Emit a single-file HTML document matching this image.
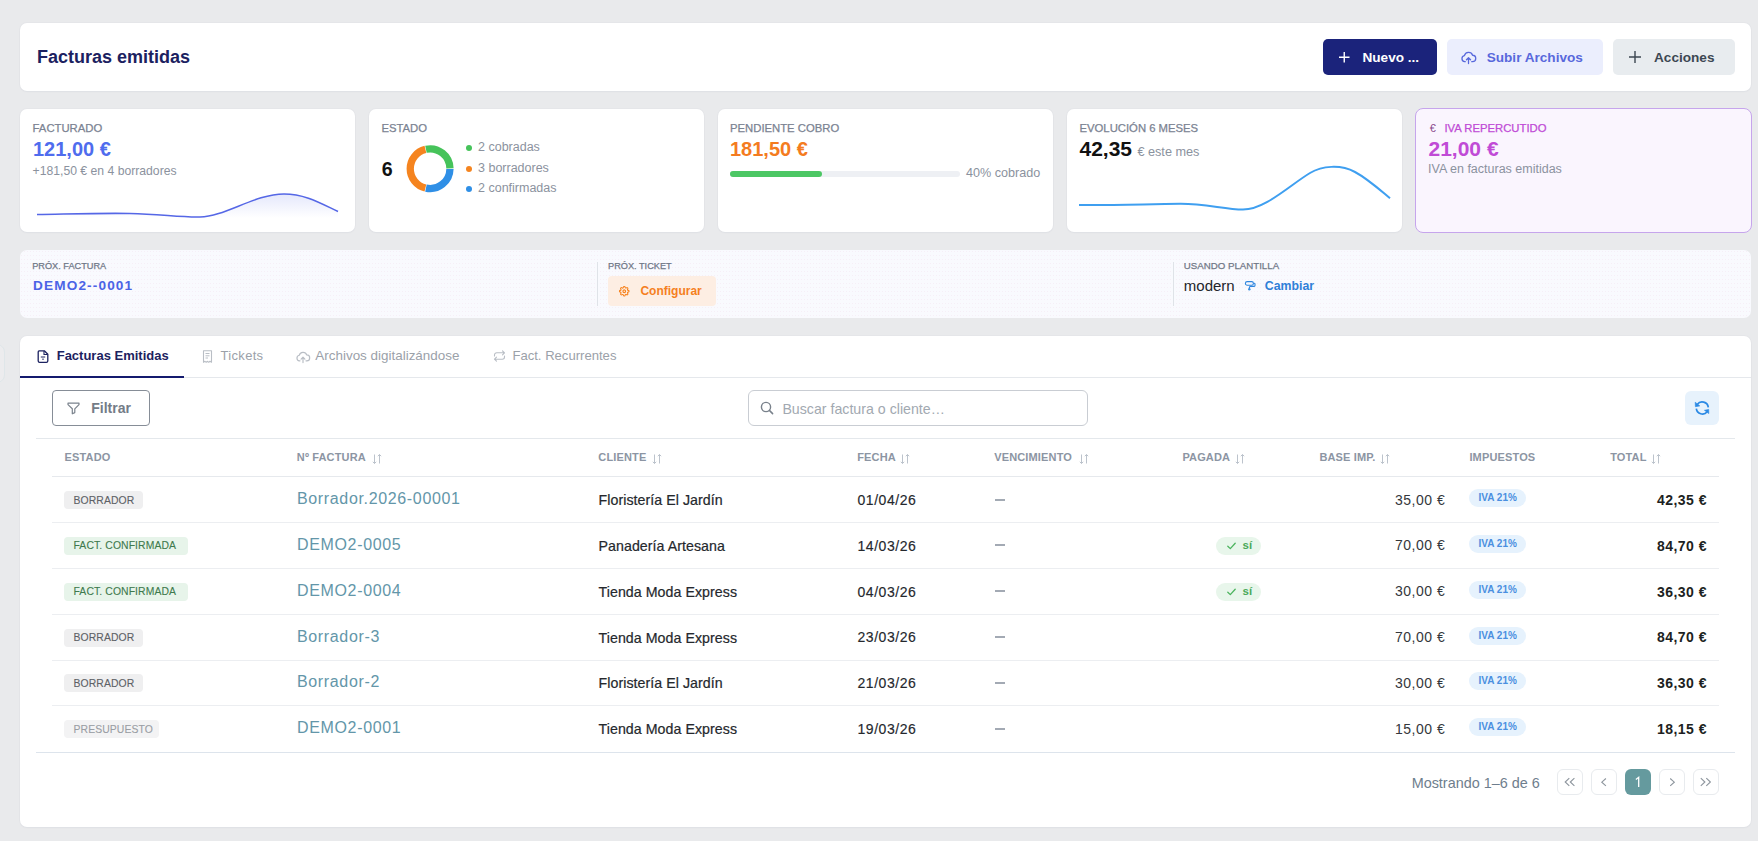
<!DOCTYPE html>
<html><head><meta charset="utf-8">
<style>
*{box-sizing:border-box;margin:0;padding:0}
html,body{width:1758px;height:841px;overflow:hidden;background:#e9eaec;font-family:"Liberation Sans",sans-serif}
.a{position:absolute}
.t{position:absolute;line-height:1;white-space:nowrap}
.m{-webkit-text-stroke:0.25px currentColor}
svg{position:absolute;overflow:visible}
</style></head><body>
<div class="a" style="left:-30px;top:344px;width:35px;height:39px;background:#ececee;border-radius:8px;border:1px solid #dfe6e9"></div>
<div class="a" style="left:20px;top:23px;width:1731px;height:68px;background:#fff;border-radius:7px;box-shadow:0 0 0 1px rgba(40,60,90,.018),0 1px 2px rgba(40,60,90,.03)"></div>
<div class="t" style="left:37.0px;top:47.76px;font-size:18px;color:#1b2160;font-weight:700">Facturas emitidas</div>
<div class="a" style="left:1323px;top:39px;width:114px;height:36px;background:#1b237b;border-radius:5px"></div>
<svg style="left:1339px;top:52px" width="11" height="11"><path d="M5.25 0V10.5M0 5.25H10.5" stroke="#fff" stroke-width="1.4"/></svg>
<div class="t" style="left:1362.5px;top:51.39px;font-size:13.6px;color:#fff;font-weight:700">Nuevo ...</div>
<div class="a" style="left:1447px;top:39px;width:156px;height:36px;background:#ebeefd;border-radius:5px"></div>
<svg style="left:1460.5px;top:51px" width="15" height="13" viewBox="0 0 16 14"><path d="M4.5 11.5H3.8A3.3 3.3 0 0 1 3.6 5 4.6 4.6 0 0 1 12.4 4.6 3.4 3.4 0 0 1 12.3 11.5H11.5M8 13.5V7.5M5.8 9.5L8 7.3 10.2 9.5" fill="none" stroke="#5868dc" stroke-width="1.4" stroke-linecap="round" stroke-linejoin="round"/></svg>
<div class="t" style="left:1486.7px;top:51.39px;font-size:13.6px;color:#5868dc;font-weight:700">Subir Archivos</div>
<div class="a" style="left:1613px;top:39px;width:122px;height:36px;background:#e8ecef;border-radius:5px"></div>
<svg style="left:1629px;top:50.8px" width="12" height="12"><path d="M6 0V12M0 6H12" stroke="#3c4752" stroke-width="1.4"/></svg>
<div class="t" style="left:1654.0px;top:51.39px;font-size:13.6px;color:#3c4752;font-weight:700">Acciones</div>
<div class="a" style="left:20px;top:109px;width:335px;height:123px;background:#fff;border-radius:7px;box-shadow:0 0 0 1px rgba(40,60,90,.018),0 1px 2px rgba(40,60,90,.03)"></div>
<div class="a" style="left:369px;top:109px;width:335px;height:123px;background:#fff;border-radius:7px;box-shadow:0 0 0 1px rgba(40,60,90,.018),0 1px 2px rgba(40,60,90,.03)"></div>
<div class="a" style="left:718px;top:109px;width:335px;height:123px;background:#fff;border-radius:7px;box-shadow:0 0 0 1px rgba(40,60,90,.018),0 1px 2px rgba(40,60,90,.03)"></div>
<div class="a" style="left:1067px;top:109px;width:335px;height:123px;background:#fff;border-radius:7px;box-shadow:0 0 0 1px rgba(40,60,90,.018),0 1px 2px rgba(40,60,90,.03)"></div>
<div class="a" style="left:1415px;top:108px;width:337px;height:125px;background:#faf5fe;border-radius:8px;border:1px solid #c6a5ec"></div>
<div class="t m" style="left:32.6px;top:122.73px;font-size:11.3px;color:#7b8392">FACTURADO</div>
<div class="t" style="left:33.0px;top:139.07px;font-size:20px;color:#4f6cee;font-weight:700">121,00 €</div>
<div class="t" style="left:32.6px;top:164.87px;font-size:12.2px;color:#8b929e">+181,50 € en 4 borradores</div>
<svg style="left:0;top:0" width="360" height="240">
  <defs><linearGradient id="g1" x1="0" y1="0" x2="0" y2="1"><stop offset="0" stop-color="#5b6ee8" stop-opacity=".16"/><stop offset="1" stop-color="#5b6ee8" stop-opacity="0"/></linearGradient></defs>
  <path d="M37 214.5 C70 214 100 213 130 213.5 C160 214 180 217.5 200 217 C225 216.5 255 194 284 194 C305 194 320 203 338 211.5 L338 218 L37 218Z" fill="url(#g1)"/>
  <path d="M37 214.5 C70 214 100 213 130 213.5 C160 214 180 217.5 200 217 C225 216.5 255 194 284 194 C305 194 320 203 338 211.5" fill="none" stroke="#5567e6" stroke-width="1.6"/>
</svg>
<div class="t m" style="left:381.4px;top:122.73px;font-size:11.3px;color:#7b8392">ESTADO</div>
<div class="t" style="left:381.8px;top:160.01px;font-size:19.6px;color:#111;font-weight:700">6</div>
<svg style="left:0;top:0" width="720" height="240">
  <path d="M449.95 168.98A19.85 19.85 0 0 1 425.95 188.11" fill="none" stroke="#2f8fe6" stroke-width="7.3"/>
  <path d="M425.41 187.99A19.85 19.85 0 0 1 425.41 149.41" fill="none" stroke="#f5841f" stroke-width="7.3"/>
  <path d="M425.95 149.29A19.85 19.85 0 0 1 449.95 168.42" fill="none" stroke="#46c35a" stroke-width="7.3"/>
</svg>
<div class="a" style="left:466px;top:144.6px;width:6px;height:6px;background:#46c35a;border-radius:3px"></div>
<div class="a" style="left:466px;top:165.7px;width:6px;height:6px;background:#f5841f;border-radius:3px"></div>
<div class="a" style="left:466px;top:185.8px;width:6px;height:6px;background:#2f8fe6;border-radius:3px"></div>
<div class="t" style="left:478.0px;top:141.22px;font-size:12.5px;color:#8b929e">2 cobradas</div>
<div class="t" style="left:478.0px;top:162.02px;font-size:12.5px;color:#8b929e">3 borradores</div>
<div class="t" style="left:478.0px;top:182.42px;font-size:12.5px;color:#8b929e">2 confirmadas</div>
<div class="t m" style="left:730.0px;top:122.73px;font-size:11.3px;color:#7b8392">PENDIENTE COBRO</div>
<div class="t" style="left:730.0px;top:138.77px;font-size:20px;color:#f47b20;font-weight:700">181,50 €</div>
<div class="a" style="left:730px;top:171px;width:230px;height:6px;background:#eef0f4;border-radius:3px"></div>
<div class="a" style="left:730px;top:171px;width:92px;height:6px;background:#4cc764;border-radius:3px"></div>
<div class="t" style="left:966.0px;top:167.23px;font-size:12.6px;color:#8b929e">40% cobrado</div>
<div class="t m" style="left:1079.5px;top:122.73px;font-size:11.3px;color:#7b8392">EVOLUCIÓN 6 MESES</div>
<div class="t" style="left:1079.5px;top:137.92px;font-size:21px;color:#111;font-weight:700">42,35</div>
<div class="t" style="left:1137.4px;top:145.55px;font-size:12.7px;color:#8b929e">€ este mes</div>
<svg style="left:0;top:0" width="1420" height="240">
  <path d="M1079 205 C1110 205.5 1150 204 1180 203.8 C1205 203.6 1225 209.6 1243 209.6 C1265 209.6 1290 185 1310 173 C1322 166 1340 164 1355 172 C1368 179 1380 190 1390 198.3" fill="none" stroke="#3f9ff0" stroke-width="2"/>
</svg>
<div class="t" style="left:1429.8px;top:123.29px;font-size:11px;color:#8a4a8c">€</div>
<div class="t m" style="left:1444.4px;top:122.73px;font-size:11.3px;color:#c04bd6">IVA REPERCUTIDO</div>
<div class="t" style="left:1428.5px;top:137.92px;font-size:21px;color:#c04bd6;font-weight:700">21,00 €</div>
<div class="t" style="left:1428.0px;top:163.02px;font-size:12.5px;color:#8b929e">IVA en facturas emitidas</div>
<div class="a" style="left:20px;top:250px;width:1731px;height:68px;background:#f9fafe;border-radius:7px;background-image:radial-gradient(circle at 1.5px 1.5px,rgba(238,212,232,.28) .7px,transparent 1px);background-size:3px 4px"></div>
<div class="t m" style="left:32.2px;top:262.01px;font-size:9.2px;color:#707887">PRÓX. FACTURA</div>
<div class="t" style="left:33.0px;top:279.09px;font-size:13.6px;color:#4b63e6;font-weight:700;letter-spacing:1.15px">DEMO2--0001</div>
<div class="a" style="left:597px;top:262px;width:1px;height:44px;background:#dfe3e8"></div>
<div class="t m" style="left:608.0px;top:262.01px;font-size:9.2px;color:#707887">PRÓX. TICKET</div>
<div class="a" style="left:608px;top:276px;width:108px;height:29.5px;background:#fdeee3;border-radius:4px"></div>
<svg style="left:618.8px;top:285.8px" width="10.5" height="10.5" viewBox="0 0 24 24"><path d="M12 15a3 3 0 1 0 0-6 3 3 0 0 0 0 6z" fill="none" stroke="#f7821d" stroke-width="2.6"/><path d="M19.4 15a1.65 1.65 0 0 0 .33 1.82l.06.06a2 2 0 1 1-2.83 2.83l-.06-.06a1.65 1.65 0 0 0-1.82-.33 1.65 1.65 0 0 0-1 1.51V21a2 2 0 0 1-4 0v-.09A1.65 1.65 0 0 0 9 19.4a1.65 1.65 0 0 0-1.82.33l-.06.06a2 2 0 1 1-2.83-2.83l.06-.06A1.65 1.65 0 0 0 4.6 15a1.65 1.65 0 0 0-1.51-1H3a2 2 0 0 1 0-4h.09A1.65 1.65 0 0 0 4.6 9a1.65 1.65 0 0 0-.33-1.82l-.06-.06a2 2 0 1 1 2.83-2.83l.06.06A1.65 1.65 0 0 0 9 4.6a1.65 1.65 0 0 0 1-1.51V3a2 2 0 0 1 4 0v.09a1.65 1.65 0 0 0 1 1.51 1.65 1.65 0 0 0 1.82-.33l.06-.06a2 2 0 1 1 2.83 2.83l-.06.06A1.65 1.65 0 0 0 19.4 9a1.65 1.65 0 0 0 1.51 1H21a2 2 0 0 1 0 4h-.09a1.65 1.65 0 0 0-1.51 1z" fill="none" stroke="#f7821d" stroke-width="2.4"/></svg>
<div class="t" style="left:640.4px;top:285.04px;font-size:12px;color:#f5801e;font-weight:700">Configurar</div>
<div class="a" style="left:1173px;top:262px;width:1px;height:44px;background:#dfe3e8"></div>
<div class="t m" style="left:1183.8px;top:261.39px;font-size:9.7px;color:#707887">USANDO PLANTILLA</div>
<div class="t" style="left:1183.8px;top:278.30px;font-size:15px;color:#23262b">modern</div>
<svg style="left:1244px;top:280px" width="12" height="12" viewBox="0 0 12 12"><rect x="1.4" y="1.6" width="8" height="3.6" rx="1.8" fill="none" stroke="#2f86de" stroke-width="1.1"/><path d="M9.4 3.2H10.2A.8 .8 0 0 1 11 4V5.6A.8 .8 0 0 1 10.2 6.4H6.6A1.2 1.2 0 0 0 5.4 7.6V8.4" fill="none" stroke="#2f86de" stroke-width="1.1" stroke-linejoin="round"/><circle cx="5.3" cy="9.3" r="1.2" fill="#3a8fe2"/></svg>
<div class="t" style="left:1264.8px;top:279.59px;font-size:12.3px;color:#2f80d8;font-weight:700">Cambiar</div>
<div class="a" style="left:20px;top:336px;width:1731px;height:491px;background:#fff;border-radius:7px;box-shadow:0 0 0 1px rgba(40,60,90,.018),0 1px 2px rgba(40,60,90,.03)"></div>
<div class="a" style="left:20px;top:377px;width:1731px;height:1px;background:#e5e8ec"></div>
<div class="a" style="left:20px;top:376px;width:164px;height:2.3px;background:#141a6e"></div>
<svg style="left:37px;top:349.5px" width="12" height="13" viewBox="0 0 12 13"><path d="M2.2 .8H7.3L10.8 4.3V11A1.4 1.4 0 0 1 9.4 12.3H2.6A1.4 1.4 0 0 1 1.2 11V2A1.2 1.2 0 0 1 2.2 .8Z" fill="none" stroke="#1c2260" stroke-width="1.3" stroke-linejoin="round"/><path d="M7 1V4.5H10.5M3.8 7H8.2M6 8.5V10" fill="none" stroke="#1c2260" stroke-width="1.1"/></svg>
<div class="t" style="left:56.7px;top:349.00px;font-size:13px;color:#1c2260;font-weight:700">Facturas Emitidas</div>
<svg style="left:202px;top:349.5px" width="11" height="13" viewBox="0 0 11 13"><path d="M1.5 .7H9.5V12.3L8 11.3 6.7 12.3 5.5 11.3 4.2 12.3 3 11.3 1.5 12.3Z" fill="none" stroke="#b9bec5" stroke-width="1.1" stroke-linejoin="round"/><path d="M3.5 3.5H7.5M3.5 5.8H7.5M3.5 8H6" stroke="#b9bec5" stroke-width="1"/></svg>
<div class="t" style="left:220.6px;top:349.00px;font-size:13px;color:#9ba1a9;letter-spacing:0.3px">Tickets</div>
<svg style="left:295.5px;top:350.5px" width="14" height="12" viewBox="0 0 16 14"><path d="M4.5 11.5H3.8A3.3 3.3 0 0 1 3.6 5 4.6 4.6 0 0 1 12.4 4.6 3.4 3.4 0 0 1 12.3 11.5H11.5M8 13.5V7.5M5.8 9.5L8 7.3 10.2 9.5" fill="none" stroke="#b9bec5" stroke-width="1.4" stroke-linecap="round" stroke-linejoin="round"/></svg>
<div class="t" style="left:315.3px;top:348.61px;font-size:13.45px;color:#9ba1a9">Archivos digitalizándose</div>
<svg style="left:492.5px;top:350px" width="13" height="12" viewBox="0 0 13 12"><path d="M9.5 .8L11.5 2.8 9.5 4.8M1.5 6V5A2.2 2.2 0 0 1 3.7 2.8H11.5M3.5 11.2L1.5 9.2 3.5 7.2M11.5 6V7A2.2 2.2 0 0 1 9.3 9.2H1.5" fill="none" stroke="#b9bec5" stroke-width="1.1" stroke-linecap="round" stroke-linejoin="round"/></svg>
<div class="t" style="left:512.4px;top:348.91px;font-size:13.1px;color:#9ba1a9">Fact. Recurrentes</div>
<div class="a" style="left:52px;top:390px;width:98px;height:36px;border-radius:4px;border:1px solid #868d97"></div>
<svg style="left:66.5px;top:401.5px" width="13" height="13" viewBox="0 0 13 13"><path d="M1 1.2H12V2.6L7.8 6.8V10.6L5.3 11.8V6.8L1 2.6Z" fill="none" stroke="#7b838d" stroke-width="1.2" stroke-linejoin="round"/></svg>
<div class="t" style="left:91.2px;top:400.65px;font-size:14px;color:#747c87;font-weight:700">Filtrar</div>
<div class="a" style="left:748px;top:390px;width:340px;height:36px;border-radius:6px;border:1px solid #c9cdd3"></div>
<svg style="left:759.5px;top:400.6px" width="14" height="14" viewBox="0 0 14 14"><circle cx="6" cy="6" r="4.6" fill="none" stroke="#79818b" stroke-width="1.4"/><path d="M9.4 9.4L12.6 12.6" stroke="#79818b" stroke-width="1.5" stroke-linecap="round"/></svg>
<div class="t" style="left:782.4px;top:401.68px;font-size:14.2px;color:#a2a9b1">Buscar factura o cliente…</div>
<div class="a" style="left:1685px;top:391px;width:34px;height:34px;background:#e7f2fc;border-radius:6px"></div>
<svg style="left:1682px;top:388px" width="40" height="40" viewBox="0 0 40 40"><path d="M15.2 16.4A6.2 6.2 0 0 1 26.3 19.4M14.3 20.6A6.2 6.2 0 0 0 25.2 23.8" fill="none" stroke="#2b89e4" stroke-width="1.7"/><path d="M13.2 14.2L13.4 18.7 17.8 17.9Z M26.8 25.6L26.7 21.4 22.4 22.3Z" fill="#2b89e4" stroke="#2b89e4" stroke-width="0.6" stroke-linejoin="round"/></svg>
<div class="a" style="left:36px;top:438px;width:1699px;height:1px;background:#e4e8ec"></div>
<div class="t" style="left:64.6px;top:452.39px;font-size:11px;color:#8c95a3;font-weight:700;letter-spacing:0.15px">ESTADO</div>
<div class="t" style="left:296.8px;top:452.39px;font-size:11px;color:#8c95a3;font-weight:700;letter-spacing:0.15px">Nº FACTURA</div>
<svg style="left:371.6px;top:454.2px" width="10" height="10" viewBox="0 0 10 10"><path d="M2.5 .5V9.5M.8 7.8L2.5 9.5 4.2 7.8M7.5 9.5V.5M5.8 2.2L7.5 .5 9.2 2.2" fill="none" stroke="#bcc3cc" stroke-width="1"/></svg>
<div class="t" style="left:598.3px;top:452.39px;font-size:11px;color:#8c95a3;font-weight:700;letter-spacing:0.15px">CLIENTE</div>
<svg style="left:652.0px;top:454.2px" width="10" height="10" viewBox="0 0 10 10"><path d="M2.5 .5V9.5M.8 7.8L2.5 9.5 4.2 7.8M7.5 9.5V.5M5.8 2.2L7.5 .5 9.2 2.2" fill="none" stroke="#bcc3cc" stroke-width="1"/></svg>
<div class="t" style="left:857.2px;top:452.39px;font-size:11px;color:#8c95a3;font-weight:700;letter-spacing:0.15px">FECHA</div>
<svg style="left:900.4px;top:454.2px" width="10" height="10" viewBox="0 0 10 10"><path d="M2.5 .5V9.5M.8 7.8L2.5 9.5 4.2 7.8M7.5 9.5V.5M5.8 2.2L7.5 .5 9.2 2.2" fill="none" stroke="#bcc3cc" stroke-width="1"/></svg>
<div class="t" style="left:994.2px;top:452.39px;font-size:11px;color:#8c95a3;font-weight:700;letter-spacing:0.15px">VENCIMIENTO</div>
<svg style="left:1079.0px;top:454.2px" width="10" height="10" viewBox="0 0 10 10"><path d="M2.5 .5V9.5M.8 7.8L2.5 9.5 4.2 7.8M7.5 9.5V.5M5.8 2.2L7.5 .5 9.2 2.2" fill="none" stroke="#bcc3cc" stroke-width="1"/></svg>
<div class="t" style="left:1182.4px;top:452.39px;font-size:11px;color:#8c95a3;font-weight:700;letter-spacing:0.15px">PAGADA</div>
<svg style="left:1234.5px;top:454.2px" width="10" height="10" viewBox="0 0 10 10"><path d="M2.5 .5V9.5M.8 7.8L2.5 9.5 4.2 7.8M7.5 9.5V.5M5.8 2.2L7.5 .5 9.2 2.2" fill="none" stroke="#bcc3cc" stroke-width="1"/></svg>
<div class="t" style="left:1319.4px;top:452.39px;font-size:11px;color:#8c95a3;font-weight:700;letter-spacing:0.15px">BASE IMP.</div>
<svg style="left:1380.0px;top:454.2px" width="10" height="10" viewBox="0 0 10 10"><path d="M2.5 .5V9.5M.8 7.8L2.5 9.5 4.2 7.8M7.5 9.5V.5M5.8 2.2L7.5 .5 9.2 2.2" fill="none" stroke="#bcc3cc" stroke-width="1"/></svg>
<div class="t" style="left:1469.4px;top:452.39px;font-size:11px;color:#8c95a3;font-weight:700;letter-spacing:0.15px">IMPUESTOS</div>
<div class="t" style="left:1610.2px;top:452.39px;font-size:11px;color:#8c95a3;font-weight:700;letter-spacing:0.15px">TOTAL</div>
<svg style="left:1650.8px;top:454.2px" width="10" height="10" viewBox="0 0 10 10"><path d="M2.5 .5V9.5M.8 7.8L2.5 9.5 4.2 7.8M7.5 9.5V.5M5.8 2.2L7.5 .5 9.2 2.2" fill="none" stroke="#bcc3cc" stroke-width="1"/></svg>
<div class="a" style="left:52px;top:476px;width:1667px;height:1px;background:#e6e9ed"></div>
<div class="a" style="left:64px;top:491.0px;width:79px;height:18px;background:#efeff0;border-radius:4px"></div>
<div class="t" style="left:73.5px;top:495.60px;font-size:10.4px;color:#5d6166;letter-spacing:0.1px;-webkit-text-stroke:.1px currentColor">BORRADOR</div>
<div class="t" style="left:297.0px;top:491.06px;font-size:16px;color:#6396a9;letter-spacing:0.65px">Borrador.2026-00001</div>
<div class="t" style="left:598.6px;top:493.08px;font-size:14.2px;color:#25282d;letter-spacing:0.05px;-webkit-text-stroke:.2px currentColor">Floristería El Jardín</div>
<div class="t" style="left:857.5px;top:492.85px;font-size:14px;color:#25282d;letter-spacing:0.55px;-webkit-text-stroke:.15px currentColor">01/04/26</div>
<div class="a" style="left:994.7px;top:499px;width:10px;height:1.5px;background:#a3aab4"></div>
<div class="t" style="left:1145.2px;width:300px;text-align:right;top:492.65px;font-size:14px;color:#34373c;letter-spacing:0.5px">35,00 €</div>
<div class="a" style="left:1469px;top:489.0px;width:57px;height:18px;background:#e6f2fd;border-radius:9px"></div>
<div class="t" style="left:1478.5px;top:493.04px;font-size:10px;color:#4a8fe0;font-weight:700">IVA 21%</div>
<div class="t" style="left:1406.9px;width:300px;text-align:right;top:492.85px;font-size:14px;color:#1d1f22;font-weight:700;letter-spacing:0.45px">42,35 €</div>
<div class="a" style="left:52px;top:522px;width:1667px;height:1px;background:#eceef1"></div>
<div class="a" style="left:64px;top:536.8px;width:124px;height:18px;background:#e7f4ea;border-radius:4px"></div>
<div class="t" style="left:73.5px;top:541.44px;font-size:10.4px;color:#3e7a4d;letter-spacing:0.1px;-webkit-text-stroke:.1px currentColor">FACT. CONFIRMADA</div>
<div class="t" style="left:297.0px;top:536.90px;font-size:16px;color:#6396a9;letter-spacing:0.65px">DEMO2-0005</div>
<div class="t" style="left:598.6px;top:538.92px;font-size:14.2px;color:#25282d;letter-spacing:0.05px;-webkit-text-stroke:.2px currentColor">Panadería Artesana</div>
<div class="t" style="left:857.5px;top:538.69px;font-size:14px;color:#25282d;letter-spacing:0.55px;-webkit-text-stroke:.15px currentColor">14/03/26</div>
<div class="a" style="left:994.7px;top:544px;width:10px;height:1.5px;background:#a3aab4"></div>
<div class="a" style="left:1216px;top:536.8px;width:45px;height:18px;background:#e8f6eb;border-radius:9px"></div>
<svg style="left:1227px;top:542.0px" width="9" height="8" viewBox="0 0 9 8"><path d="M.8 4.2L3.3 6.6 8.2 1.2" fill="none" stroke="#4cb45e" stroke-width="1.3" stroke-linecap="round" stroke-linejoin="round"/></svg>
<div class="t" style="left:1242.5px;top:540.11px;font-size:11.5px;color:#4aa95a;font-weight:700">sí</div>
<div class="t" style="left:1145.2px;width:300px;text-align:right;top:538.49px;font-size:14px;color:#34373c;letter-spacing:0.5px">70,00 €</div>
<div class="a" style="left:1469px;top:534.8px;width:57px;height:18px;background:#e6f2fd;border-radius:9px"></div>
<div class="t" style="left:1478.5px;top:538.87px;font-size:10px;color:#4a8fe0;font-weight:700">IVA 21%</div>
<div class="t" style="left:1406.9px;width:300px;text-align:right;top:538.69px;font-size:14px;color:#1d1f22;font-weight:700;letter-spacing:0.45px">84,70 €</div>
<div class="a" style="left:52px;top:568px;width:1667px;height:1px;background:#eceef1"></div>
<div class="a" style="left:64px;top:582.7px;width:124px;height:18px;background:#e7f4ea;border-radius:4px"></div>
<div class="t" style="left:73.5px;top:587.28px;font-size:10.4px;color:#3e7a4d;letter-spacing:0.1px;-webkit-text-stroke:.1px currentColor">FACT. CONFIRMADA</div>
<div class="t" style="left:297.0px;top:582.74px;font-size:16px;color:#6396a9;letter-spacing:0.65px">DEMO2-0004</div>
<div class="t" style="left:598.6px;top:584.76px;font-size:14.2px;color:#25282d;letter-spacing:0.05px;-webkit-text-stroke:.2px currentColor">Tienda Moda Express</div>
<div class="t" style="left:857.5px;top:584.53px;font-size:14px;color:#25282d;letter-spacing:0.55px;-webkit-text-stroke:.15px currentColor">04/03/26</div>
<div class="a" style="left:994.7px;top:590px;width:10px;height:1.5px;background:#a3aab4"></div>
<div class="a" style="left:1216px;top:582.7px;width:45px;height:18px;background:#e8f6eb;border-radius:9px"></div>
<svg style="left:1227px;top:587.9px" width="9" height="8" viewBox="0 0 9 8"><path d="M.8 4.2L3.3 6.6 8.2 1.2" fill="none" stroke="#4cb45e" stroke-width="1.3" stroke-linecap="round" stroke-linejoin="round"/></svg>
<div class="t" style="left:1242.5px;top:585.95px;font-size:11.5px;color:#4aa95a;font-weight:700">sí</div>
<div class="t" style="left:1145.2px;width:300px;text-align:right;top:584.33px;font-size:14px;color:#34373c;letter-spacing:0.5px">30,00 €</div>
<div class="a" style="left:1469px;top:580.7px;width:57px;height:18px;background:#e6f2fd;border-radius:9px"></div>
<div class="t" style="left:1478.5px;top:584.71px;font-size:10px;color:#4a8fe0;font-weight:700">IVA 21%</div>
<div class="t" style="left:1406.9px;width:300px;text-align:right;top:584.53px;font-size:14px;color:#1d1f22;font-weight:700;letter-spacing:0.45px">36,30 €</div>
<div class="a" style="left:52px;top:614px;width:1667px;height:1px;background:#eceef1"></div>
<div class="a" style="left:64px;top:628.5px;width:79px;height:18px;background:#efeff0;border-radius:4px"></div>
<div class="t" style="left:73.5px;top:633.12px;font-size:10.4px;color:#5d6166;letter-spacing:0.1px;-webkit-text-stroke:.1px currentColor">BORRADOR</div>
<div class="t" style="left:297.0px;top:628.58px;font-size:16px;color:#6396a9;letter-spacing:0.65px">Borrador-3</div>
<div class="t" style="left:598.6px;top:630.60px;font-size:14.2px;color:#25282d;letter-spacing:0.05px;-webkit-text-stroke:.2px currentColor">Tienda Moda Express</div>
<div class="t" style="left:857.5px;top:630.37px;font-size:14px;color:#25282d;letter-spacing:0.55px;-webkit-text-stroke:.15px currentColor">23/03/26</div>
<div class="a" style="left:994.7px;top:636px;width:10px;height:1.5px;background:#a3aab4"></div>
<div class="t" style="left:1145.2px;width:300px;text-align:right;top:630.17px;font-size:14px;color:#34373c;letter-spacing:0.5px">70,00 €</div>
<div class="a" style="left:1469px;top:626.5px;width:57px;height:18px;background:#e6f2fd;border-radius:9px"></div>
<div class="t" style="left:1478.5px;top:630.55px;font-size:10px;color:#4a8fe0;font-weight:700">IVA 21%</div>
<div class="t" style="left:1406.9px;width:300px;text-align:right;top:630.37px;font-size:14px;color:#1d1f22;font-weight:700;letter-spacing:0.45px">84,70 €</div>
<div class="a" style="left:52px;top:660px;width:1667px;height:1px;background:#eceef1"></div>
<div class="a" style="left:64px;top:674.4px;width:79px;height:18px;background:#efeff0;border-radius:4px"></div>
<div class="t" style="left:73.5px;top:678.96px;font-size:10.4px;color:#5d6166;letter-spacing:0.1px;-webkit-text-stroke:.1px currentColor">BORRADOR</div>
<div class="t" style="left:297.0px;top:674.42px;font-size:16px;color:#6396a9;letter-spacing:0.65px">Borrador-2</div>
<div class="t" style="left:598.6px;top:676.44px;font-size:14.2px;color:#25282d;letter-spacing:0.05px;-webkit-text-stroke:.2px currentColor">Floristería El Jardín</div>
<div class="t" style="left:857.5px;top:676.21px;font-size:14px;color:#25282d;letter-spacing:0.55px;-webkit-text-stroke:.15px currentColor">21/03/26</div>
<div class="a" style="left:994.7px;top:682px;width:10px;height:1.5px;background:#a3aab4"></div>
<div class="t" style="left:1145.2px;width:300px;text-align:right;top:676.01px;font-size:14px;color:#34373c;letter-spacing:0.5px">30,00 €</div>
<div class="a" style="left:1469px;top:672.4px;width:57px;height:18px;background:#e6f2fd;border-radius:9px"></div>
<div class="t" style="left:1478.5px;top:676.39px;font-size:10px;color:#4a8fe0;font-weight:700">IVA 21%</div>
<div class="t" style="left:1406.9px;width:300px;text-align:right;top:676.21px;font-size:14px;color:#1d1f22;font-weight:700;letter-spacing:0.45px">36,30 €</div>
<div class="a" style="left:52px;top:705px;width:1667px;height:1px;background:#eceef1"></div>
<div class="a" style="left:64px;top:720.2px;width:95px;height:18px;background:#f3f3f4;border-radius:4px"></div>
<div class="t" style="left:73.5px;top:724.80px;font-size:10.4px;color:#9a9ea4;letter-spacing:0.1px;-webkit-text-stroke:.1px currentColor">PRESUPUESTO</div>
<div class="t" style="left:297.0px;top:720.26px;font-size:16px;color:#6396a9;letter-spacing:0.65px">DEMO2-0001</div>
<div class="t" style="left:598.6px;top:722.28px;font-size:14.2px;color:#25282d;letter-spacing:0.05px;-webkit-text-stroke:.2px currentColor">Tienda Moda Express</div>
<div class="t" style="left:857.5px;top:722.05px;font-size:14px;color:#25282d;letter-spacing:0.55px;-webkit-text-stroke:.15px currentColor">19/03/26</div>
<div class="a" style="left:994.7px;top:728px;width:10px;height:1.5px;background:#a3aab4"></div>
<div class="t" style="left:1145.2px;width:300px;text-align:right;top:721.85px;font-size:14px;color:#34373c;letter-spacing:0.5px">15,00 €</div>
<div class="a" style="left:1469px;top:718.2px;width:57px;height:18px;background:#e6f2fd;border-radius:9px"></div>
<div class="t" style="left:1478.5px;top:722.23px;font-size:10px;color:#4a8fe0;font-weight:700">IVA 21%</div>
<div class="t" style="left:1406.9px;width:300px;text-align:right;top:722.05px;font-size:14px;color:#1d1f22;font-weight:700;letter-spacing:0.45px">18,15 €</div>
<div class="a" style="left:36px;top:752px;width:1699px;height:1px;background:#dde4ec"></div>
<div class="t" style="left:1411.7px;top:775.61px;font-size:14.4px;color:#6e7e8d">Mostrando 1–6 de 6</div>
<div class="a" style="left:1557px;top:769px;width:26px;height:26px;border-radius:6px;border:1px solid #e8ebee"></div>
<div class="a" style="left:1591px;top:769px;width:26px;height:26px;border-radius:6px;border:1px solid #e8ebee"></div>
<div class="a" style="left:1625px;top:769px;width:26px;height:26px;background:#659a9e;border-radius:6px"></div>
<div class="a" style="left:1659px;top:769px;width:26px;height:26px;border-radius:6px;border:1px solid #e8ebee"></div>
<div class="a" style="left:1693px;top:769px;width:26px;height:26px;border-radius:6px;border:1px solid #e8ebee"></div>
<svg style="left:0;top:0" width="1758" height="841"><path d="M1569.3 778.1L1565.2 782 1569.3 785.9M1574.4 778.1L1570.3 782 1574.4 785.9M1605.9 778.5L1601.8 782.2 1605.9 785.9M1670.2 778.5L1674.3 782.2 1670.2 785.9M1700.8 778.1L1704.9 782 1700.8 785.9M1706.3 778.1L1710.4 782 1706.3 785.9" fill="none" stroke="#8d959d" stroke-width="1.1"/><path d="M1635.9 779.6L1638.7 777.3V787" fill="none" stroke="#fff" stroke-width="1.3"/></svg>
</body></html>
